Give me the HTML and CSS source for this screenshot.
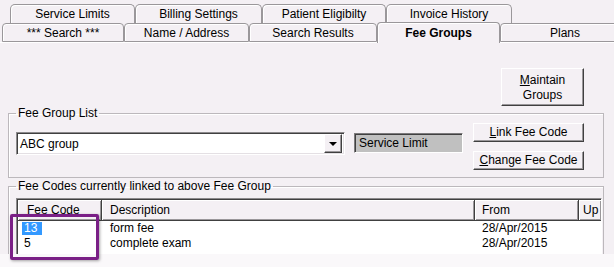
FILE: index.html
```html
<!DOCTYPE html>
<html>
<head>
<meta charset="utf-8">
<link rel="stylesheet" href="styles.css">
</head>
<body>
<div class="page">
  <div class="window">
    <div class="tabstrip">
      <div class="tabrow back">
        <div class="tab w125">Service Limits</div>
        <div class="tab w127">Billing Settings</div>
        <div class="tab w124">Patient Eligibilty</div>
        <div class="tab w126">Invoice History</div>
      </div>
      <div class="tabrow front">
        <div class="tab w122">*** Search ***</div>
        <div class="tab w125">Name / Address</div>
        <div class="tab w128">Search Results</div>
        <div class="tab w123 active">Fee Groups</div>
        <div class="tab w130">Plans</div>
      </div>
    </div>
    <div class="panel">
      <div class="top-actions">
        <div class="btn maintain"><span><u>M</u>aintain</span><span>Groups</span></div>
      </div>
      <fieldset class="group g1">
        <legend>Fee Group List</legend>
        <div class="g1-body">
          <div class="combo">
            <span class="combo-text">ABC group</span>
            <span class="combo-btn"><span class="arrow"></span></span>
          </div>
          <div class="limit">Service Limit</div>
          <div class="btn-col">
            <div class="btn small"><span><u>L</u>ink Fee Code</span></div>
            <div class="btn small b2"><span><u>C</u>hange Fee Code</span></div>
          </div>
        </div>
      </fieldset>
      <fieldset class="group g2">
        <legend>Fee Codes currently linked to above Fee Group</legend>
        <div class="listview">
          <div class="lv-head">
            <div class="hcell c1">Fee Code</div>
            <div class="hcell c2">Description</div>
            <div class="hcell c3">From</div>
            <div class="hcell c4">Up</div>
          </div>
          <div class="lv-row">
            <div class="cell c1"><span class="sel">13</span></div>
            <div class="cell c2">form fee</div>
            <div class="cell c3">28/Apr/2015</div>
          </div>
          <div class="lv-row">
            <div class="cell c1"><span class="plain">5</span></div>
            <div class="cell c2">complete exam</div>
            <div class="cell c3">28/Apr/2015</div>
          </div>
        </div>
      </fieldset>
    </div>
  </div>
  <div class="callout"></div>
</div>
</body>
</html>
```
FILE: styles.css
```css
* { box-sizing: border-box; }
html, body { margin: 0; padding: 0; }
body {
  background: #faf8fa;
  font-family: "Liberation Sans", Arial, sans-serif;
  font-size: 12px;
  color: #000;
  width: 614px;
  height: 267px;
  overflow: hidden;
}
.page { position: relative; width: 614px; height: 267px; }
.window {
  width: 614px;
  height: 254px;
  overflow: hidden;
  background: #f4f0f4;
}

/* Tabs */
.tabstrip { padding-top: 4px; height: 42px; position: relative; }
.tabrow { display: flex; white-space: nowrap; }
.tabrow.back { padding-left: 10px; height: 19px; }
.tabrow.front { padding-left: 2px; height: 19px; position: relative; z-index: 1; }
.tab {
  flex: none;
  height: 19px;
  line-height: 18px;
  text-align: center;
  border: 1px solid #9a979a;
  border-bottom: none;
  border-radius: 5px 5px 0 0;
  box-shadow: inset 1px 1px 0 #ffffff;
  background: #f4f0f4;
}
.tabrow.back .tab { height: 19px; }
.tabrow.front .tab { height: 19px; margin-top: 0; border-bottom: 1px solid #9a979a; line-height: 18px; border-radius: 4px 4px 0 0; }
.tabrow.front .tab.active {
  font-weight: bold;
  height: 21px;
  margin-top: -1px;
  border-bottom: none;
  line-height: 20px;
  position: relative;
  z-index: 2;
}
.w122 { width: 122px; } .w123 { width: 123px; } .w124 { width: 124px; }
.w125 { width: 125px; } .w126 { width: 126px; } .w127 { width: 127px; }
.w128 { width: 128px; } .w130 { width: 130px; }

/* Panel */
.panel {
  padding: 0 10px 0 8px;
  border-top: 1px solid #ffffff;
}
.top-actions { display: flex; justify-content: flex-end; padding: 25px 20px 0 0; }

.btn {
  display: flex;
  flex-direction: column;
  align-items: center;
  justify-content: center;
  background: #f4f0f4;
  border: 1px solid;
  border-color: #ffffff #404040 #404040 #ffffff;
  box-shadow: inset -1px -1px 0 #9a979a;
  line-height: 15px;
}
.maintain { width: 83px; height: 38px; padding-top: 1px; }

.group {
  margin: 0;
  border: 1px solid #bcb8bc;
  box-shadow: inset 1px 1px 0 #ffffff;
  min-width: 0;
}
.group legend {
  padding: 0 2px;
  line-height: 14px;
  height: 14px;
}
.g1 { padding: 3px 19px 7px 7px; }
.g1-body { display: flex; align-items: flex-start; }
.combo {
  width: 329px;
  height: 23px;
  margin-top: 9px;
  background: #fff;
  border: 1px solid;
  border-color: #8c8a8c #ffffff #ffffff #8c8a8c;
  box-shadow: inset 1px 1px 0 #404040, inset -1px -1px 0 #e4e0e4;
  display: flex;
  align-items: center;
  padding: 2px 2px 2px 3px;
}
.combo-text { flex: 1; }
.combo-btn {
  width: 18px;
  height: 19px;
  background: #f4f0f4;
  border: 1px solid;
  border-color: #ffffff #404040 #404040 #ffffff;
  box-shadow: inset -1px -1px 0 #9a979a;
  display: flex;
  align-items: center;
  justify-content: center;
}
.arrow {
  width: 0; height: 0;
  border-left: 4px solid transparent;
  border-right: 4px solid transparent;
  border-top: 4px solid #000;
  margin-top: 1px;
}
.limit {
  width: 109px;
  height: 20px;
  margin: 10px 0 0 9px;
  background: #c0c0c0;
  border: 1px solid;
  border-color: #7c7a7c #ffffff #ffffff #7c7a7c;
  box-shadow: inset 1px 1px 0 #404040;
  padding-left: 4px;
  line-height: 18px;
}
.btn-col { margin-left: 10px; display: flex; flex-direction: column; }
.btn.small { width: 111px; height: 19px; }
.btn.b2 { margin-top: 9px; height: 19px; }

.g2 { margin-top: 1px; padding: 5px 1px 0 7px; height: 120px; }
.listview {
  background: #fff;
  border: 1px solid;
  border-color: #8c8a8c #ffffff #ffffff #8c8a8c;
  box-shadow: inset 1px 1px 0 #404040;
  height: 100px;
  padding: 1px 0 0 1px;
}
.lv-head { display: flex; height: 21px; }
.hcell {
  background: #f4f0f4;
  border-right: 1px solid #404040;
  border-bottom: 1px solid #404040;
  box-shadow: inset 1px 1px 0 #ffffff, inset -1px -1px 0 #9a979a;
  line-height: 20px;
  white-space: nowrap;
  overflow: hidden;
}
.c1 { width: 84px; flex: none; }
.c2 { width: 373px; flex: none; }
.c3 { width: 104px; flex: none; }
.c4 { flex: 1; }
.hcell.c1 { padding-left: 9px; }
.hcell.c2 { padding-left: 8px; }
.hcell.c3 { padding-left: 7px; }
.hcell.c4 { padding-left: 4px; border-right: none; }
.lv-row { display: flex; height: 15px; line-height: 14px; }
.lv-row .cell.c1 { padding-left: 4px; }
.lv-row .cell.c2 { padding-left: 8px; }
.lv-row .cell.c3 { padding-left: 7px; }
.sel { background: #3399ff; color: #fff; padding: 0 5px 0 2px; display: inline-block; line-height: 13px; }
.plain { padding-left: 2px; }

.callout {
  position: absolute;
  left: 10px;
  top: 214px;
  width: 89px;
  height: 46px;
  border: 3px solid #7a1f86;
  border-radius: 2px;
  box-shadow: 1px 1px 3px rgba(0,0,0,0.35);
}
```
